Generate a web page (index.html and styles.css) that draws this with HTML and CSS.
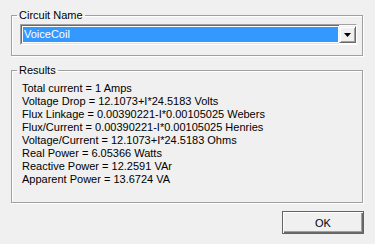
FILE: index.html
```html
<!DOCTYPE html>
<html>
<head>
<meta charset="utf-8">
<link rel="stylesheet" href="styles.css">
</head>
<body>
<div class="dialog">
  <fieldset class="group group-circuit">
    <legend class="legend">Circuit Name</legend>
    <div class="combo">
      <div class="combo-field"><span class="combo-sel">VoiceCoil</span></div>
      <div class="combo-btn">
        <svg width="7" height="4" viewBox="0 0 7 4"><path d="M0 0h7L3.5 4z" fill="#000"/></svg>
      </div>
    </div>
  </fieldset>
  <fieldset class="group group-results">
    <legend class="legend">Results</legend>
    <div class="results">
      <div class="line">Total current = 1 Amps</div>
      <div class="line">Voltage Drop = 12.1073+I*24.5183 Volts</div>
      <div class="line">Flux Linkage = 0.00390221-I*0.00105025 Webers</div>
      <div class="line">Flux/Current = 0.00390221-I*0.00105025 Henries</div>
      <div class="line">Voltage/Current = 12.1073+I*24.5183 Ohms</div>
      <div class="line">Real Power = 6.05366 Watts</div>
      <div class="line">Reactive Power = 12.2591 VAr</div>
      <div class="line">Apparent Power = 13.6724 VA</div>
    </div>
  </fieldset>
  <div class="actions">
    <button class="btn">OK</button>
  </div>
</div>
</body>
</html>
```
FILE: styles.css
```css
html, body {
  margin: 0;
  padding: 0;
  background: #f0f0f0;
}
body {
  font-family: "Liberation Sans", Arial, sans-serif;
  font-size: 11px;
  color: #000;
}
.dialog {
  width: 375px;
  height: 244px;
  padding: 9px 0 0 11px;
  box-sizing: border-box;
}
.group {
  margin: 0;
  width: 352px;
  box-sizing: border-box;
  border: 1px solid #a0a0a0;
  box-shadow: 1px 1px 0 #fff, inset 1px 1px 0 #fff;
  min-width: 0;
}
.legend {
  line-height: 12px;
  height: 12px;
  padding: 0 2px;
}
.group-circuit {
  padding: 3px 5px 10px 8px;
}
.group-circuit .legend {
  margin-left: -3px;
}
.combo {
  display: flex;
  height: 21px;
  box-sizing: border-box;
  border-top: 1px solid #a0a0a0;
  border-left: 1px solid #a0a0a0;
  border-right: 1px solid #fff;
  border-bottom: 1px solid #fff;
  background: #fff;
}
.combo-field {
  flex: 1;
  display: flex;
  padding: 0;
  border-top: 1px solid #696969;
  border-left: 1px solid #696969;
  border-bottom: 1px solid #e3e3e3;
  background: #fff;
}
.combo-sel {
  flex: 1;
  margin: 1px 1px 1px 1px;
  background: #3399ff;
  color: #fff;
  line-height: 15px;
  padding-left: 1px;
}
.combo-btn {
  width: 17px;
  box-sizing: border-box;
  background: #f0f0f0;
  border-top: 1px solid #f0f0f0;
  border-left: 1px solid #f0f0f0;
  border-right: 1px solid #696969;
  border-bottom: 1px solid #696969;
  box-shadow: inset 1px 1px 0 #fff, inset -1px -1px 0 #a0a0a0;
  display: flex;
  align-items: center;
  justify-content: center;
  margin-top: 1px;
  margin-bottom: 1px;
}
.group-results {
  margin-top: 8px;
  padding: 6px 5px 16px 10px;
}
.group-results .legend {
  margin-left: -5px;
}
.line {
  line-height: 13px;
  white-space: nowrap;
}
.actions {
  display: flex;
  justify-content: flex-end;
  width: 353px;
  margin-top: 8px;
}
.btn {
  width: 82px;
  height: 23px;
  margin: 0;
  padding: 0;
  font-family: inherit;
  font-size: 11px;
  color: #000;
  background: #f0f0f0;
  border: 1px solid #646464;
  box-shadow: inset 1px 1px 0 #fff, inset -1px -1px 0 #696969, inset -2px -2px 0 #a0a0a0;
}
```
